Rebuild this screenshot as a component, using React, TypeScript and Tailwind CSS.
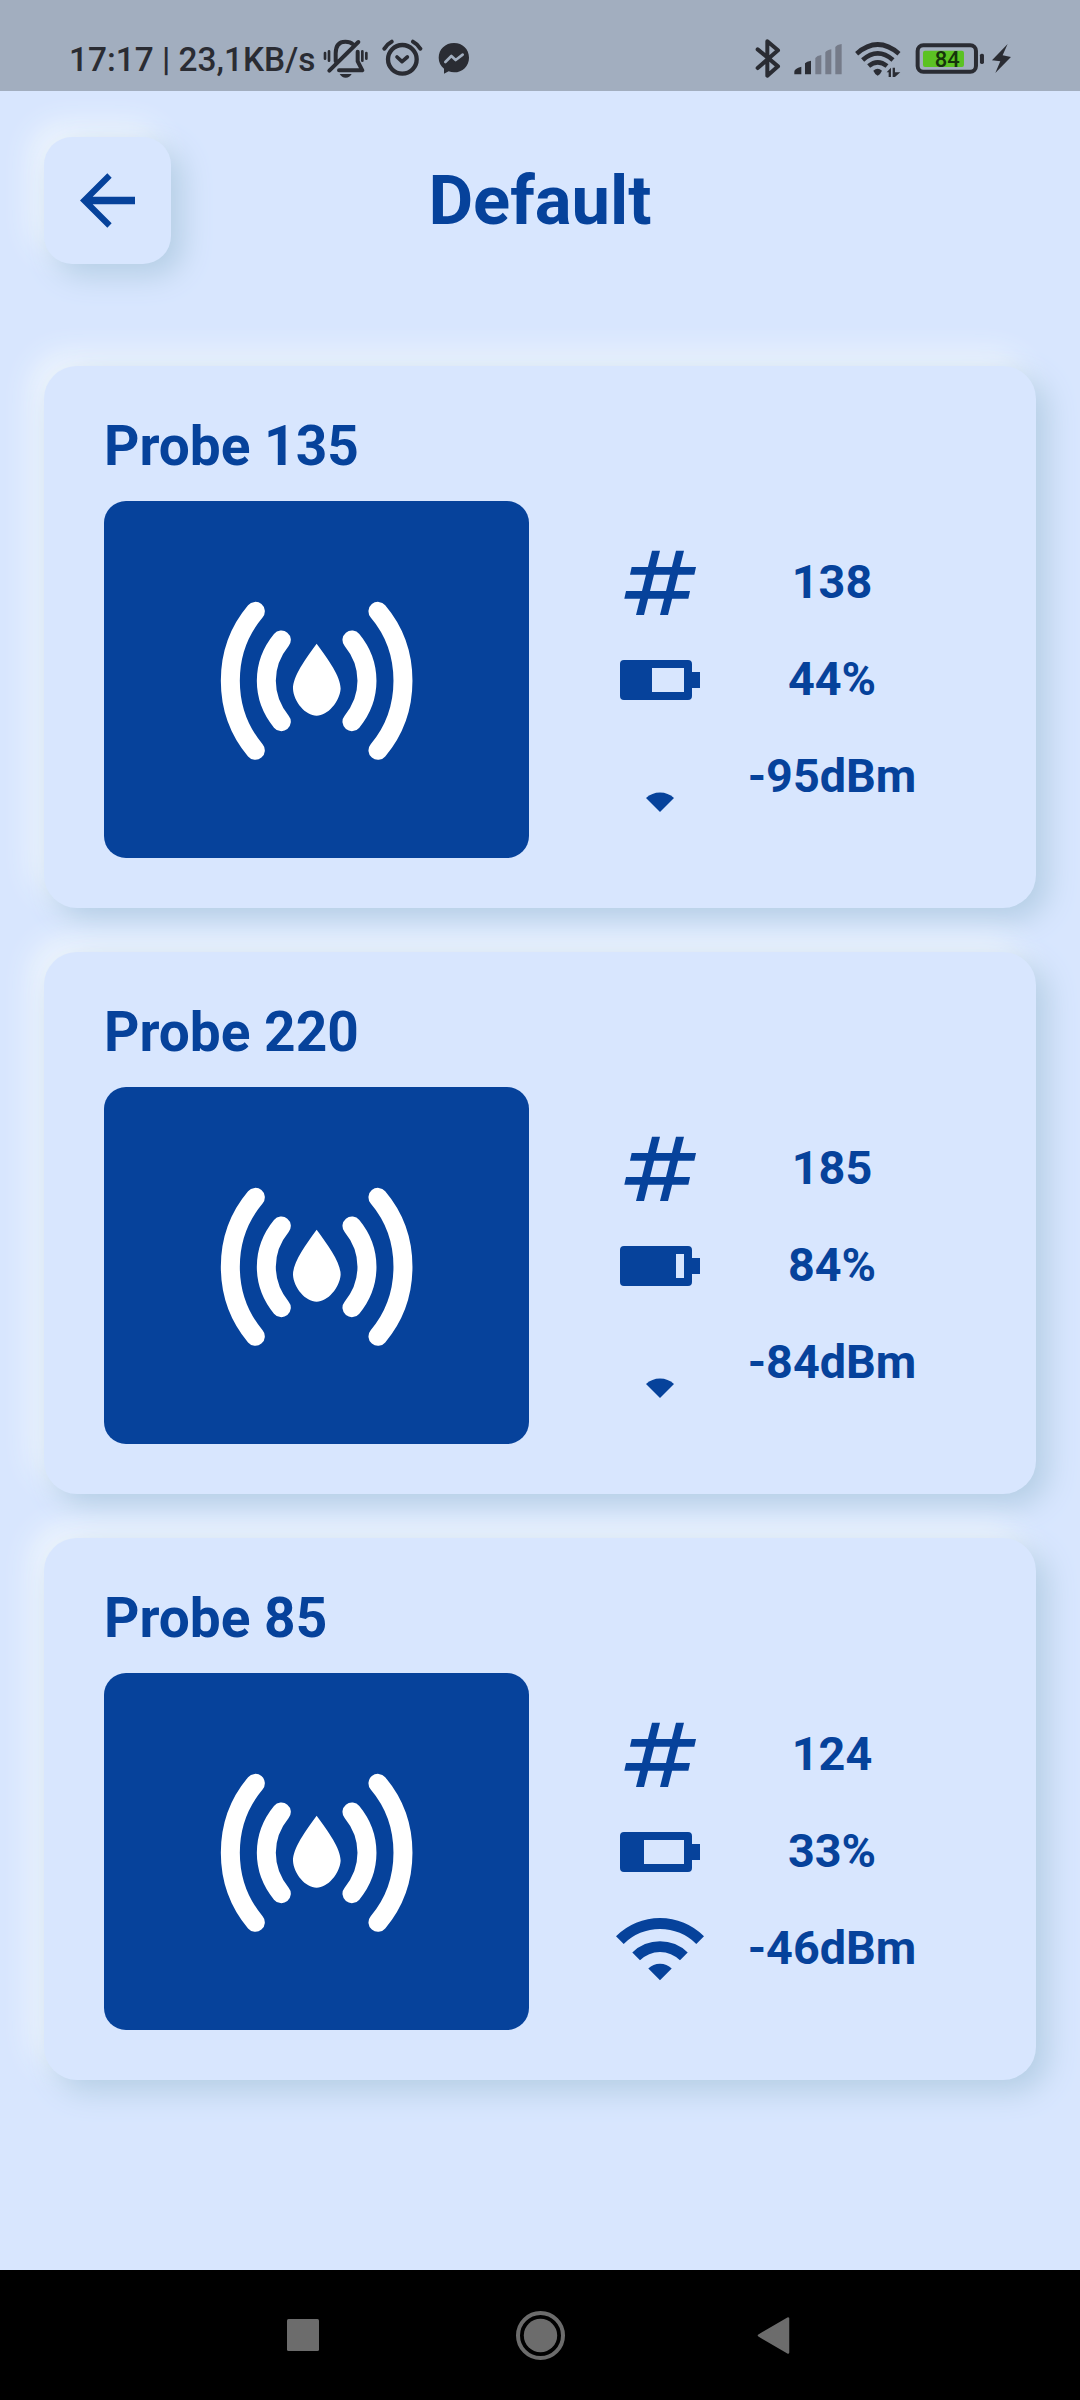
import React from "react";

const INK = "#06429b";

function BackArrow() {
  return (
    <svg viewBox="240 249 165 165" className="h-[55px] w-[55px]" fill={INK}>
      <path d="M240 331.500 322 250l13 13.500-57 57H405v22H278l57 57-13 13.500Z" />
    </svg>
  );
}

function HashIcon() {
  return (
    <svg viewBox="0 0 288 288" className="h-24 w-24" fill={INK}>
      <path d="M120 47h24L96 240H72Z" />
      <path d="M192 47h24L168 240h-24Z" />
      <path d="M59 96H252l-5 23H54Z" />
      <path d="M42 168H234l-5 23H37Z" />
    </svg>
  );
}

function BatteryIcon({ cut }: { cut: number }) {
  return (
    <svg viewBox="0 0 96 96" className="h-24 w-24" fill={INK}>
      <path
        fillRule="evenodd"
        d={`M12 28h64a4 4 0 0 1 4 4v8h8v16h-8v8a4 4 0 0 1-4 4H12a4 4 0 0 1-4-4V32a4 4 0 0 1 4-4ZM${cut} 36V60H72V36Z`}
      />
    </svg>
  );
}

function WifiWeakIcon() {
  return (
    <svg viewBox="0 0 96 96" className="h-24 w-24" fill={INK}>
      <path d="M48 83 34 68.900Q40 63.400 48 63.400T62 68.900Z" />
    </svg>
  );
}

function WifiFullIcon() {
  return (
    <svg viewBox="0 0 96 96" className="h-24 w-24" fill={INK}>
      <path d="M4 35.300A62.200 62.200 0 0 1 92 35.300L84.300 43A51.300 51.300 0 0 0 11.700 43ZM20.300 51.600A39.200 39.200 0 0 1 75.700 51.600L68 59.300A28.300 28.300 0 0 0 28 59.300ZM36.300 67.600A16.600 16.600 0 0 1 59.700 67.600L48 79.300Z" />
    </svg>
  );
}

function ProbeIcon() {
  return (
    <svg viewBox="420 660 580 486" className="mt-[3px] h-[162px] w-[193.300px]" fill="none" stroke="white" strokeWidth="57" strokeLinecap="round">
      <path d="M526 694C426 812 426 992 526 1111M604 780C544 853 544 952 604 1025" />
      <path d="M894 694C994 812 994 992 894 1111M816 780C876 853 876 952 816 1025" />
      <path
        d="M710 791C745 839 782 889 782 926C779 965 743 1007 710 1007S641 965 639 926C639 889 675 839 710 791Z"
        fill="white"
        stroke="none"
      />
    </svg>
  );
}

type Probe = { name: string; id: string; battery: string; cut: number; signal: string; strong: boolean };

const probes: Probe[] = [
  { name: "Probe 135", id: "138", battery: "44%", cut: 40, signal: "-95dBm", strong: false },
  { name: "Probe 220", id: "185", battery: "84%", cut: 64, signal: "-84dBm", strong: false },
  { name: "Probe 85", id: "124", battery: "33%", cut: 32, signal: "-46dBm", strong: true },
];

function Stat({ icon, value }: { icon: React.ReactNode; value: string }) {
  return (
    <div className="flex h-[97px] items-center">
      {icon}
      <span className="-mt-[2px] ml-6 w-[200px] text-center text-[46.750px] leading-[54px] font-bold">{value}</span>
    </div>
  );
}

function ProbeCard({ probe }: { probe: Probe }) {
  return (
    <section className="h-[542px] rounded-[33px] bg-[#d8e6fe] pt-[48px] pl-[60px] shadow-[11px_11px_30px_#b3cde4,-11px_-11px_30px_#f3f8fd]">
      <h2 className="text-[55px] leading-[64px] font-bold">{probe.name}</h2>
      <div className="mt-[22.500px] flex">
        <div className="flex h-[357.500px] w-[425px] items-center justify-center rounded-[22px] bg-[#06429b]">
          <ProbeIcon />
        </div>
        <div className="ml-[83px] pt-[33.500px]">
          <Stat icon={<HashIcon />} value={probe.id} />
          <Stat icon={<BatteryIcon cut={probe.cut} />} value={probe.battery} />
          <Stat icon={probe.strong ? <WifiFullIcon /> : <WifiWeakIcon />} value={probe.signal} />
        </div>
      </div>
    </section>
  );
}

function StatusBar() {
  return (
    <header className="flex h-[91px] items-center bg-[#a2aebf] pt-[27px] pl-[69px] text-[#2a2c33]">
      <span className="mt-[2px] w-[254.300px] text-[33.400px] leading-[40px] font-medium whitespace-nowrap">17:17 | 23,1KB/s</span>
      <svg viewBox="820 60 440 120" className="h-10 w-[146.700px]" fill="none" stroke="#2a2c33" strokeLinecap="round" strokeLinejoin="round">
        <path d="M858 127V103Q858 68 887 68Q902 68 910 76M924 98V127L938 154H868M926 69 839 155" strokeWidth="12" />
        <path d="M826 102V119M838 97V125M938 97V125M950 102V119" strokeWidth="8" />
        <path d="M870 165H906Q900 176 888 176T870 165Z" fill="#2a2c33" stroke="none" />
        <circle cx="1058" cy="121" r="43" strokeWidth="13" />
        <path d="M1042 114 1057 128 1073 114" strokeWidth="11" />
        <path d="M1004 89Q1012 75 1026 68M1090 68Q1104 75 1112 89" strokeWidth="12" />
        <path d="M1213 72C1187 72 1167 91 1167 116C1167 130 1173 141 1183 149V164L1197 157Q1205 160 1213 160C1239 160 1258 141 1258 116S1239 72 1213 72Z" fill="#2a2c33" stroke="none" />
        <path d="M1187 129 1205 111 1218 123 1239 107" stroke="#a2aebf" strokeWidth="8" />
      </svg>
      <svg viewBox="75 55 775 125" className="ml-[285px] h-[41.700px] w-[258.300px]" fill="none" stroke="#2a2c33" strokeLinecap="round" strokeLinejoin="round">
        <path d="M83 89 144 140 112 168V65L144 92 83 145" strokeWidth="12" />
        <g fill="#2a2c33" stroke="none">
          <path d="M193 156Q193 147 214 141V164H193ZM225 131Q230 125 243 123V164H225Z" />
          <path d="M256 115Q261 108 274 106V164H256ZM286 98Q290 92 304 89V164H286ZM316 82Q321 75 335 73V164H316Z" fill="#757b89" />
          <path d="M430 153Q443 141 456 153Q452 163 443 168Q434 163 430 153Z" />
          <path d="M470 158 483 144V172H476V158ZM488 144H495V158H511L495 172H488Z" />
        </g>
        <path d="M380 102Q443 47 507 102M398 121Q443 81 489 121" strokeWidth="14" strokeLinecap="butt" />
        <path d="M416 139Q443 117 471 139" strokeWidth="14" strokeLinecap="butt" />
        <rect x="563" y="77" width="175" height="79" rx="17" strokeWidth="12" />
        <rect x="579" y="93" width="123" height="49" rx="6" fill="#5bc223" stroke="none" />
        <rect x="750" y="102" width="12" height="31" rx="5" fill="#2a2c33" stroke="none" />
        <path d="M833 73 786 122 811 125 796 160 843 112 818 107Z" fill="#2a2c33" stroke="none" />
        <text x="652" y="143" textAnchor="middle" fontSize="66" fill="#16330c" stroke="none" fontWeight="500">84</text>
      </svg>
    </header>
  );
}

export default function App() {
  return (
    <div className="flex h-[2400px] w-[1080px] flex-col overflow-hidden bg-[#d8e6fe] font-[Roboto,sans-serif] text-[#06429b]">
      <StatusBar />
      <div className="mx-11 mt-[46px] grid h-[127px] grid-cols-[127px_1fr_127px] items-center">
        <button className="flex h-[127px] w-[127px] items-center justify-center rounded-[28px] bg-[#d8e6fe] shadow-[11px_11px_30px_#b3cde4,-11px_-11px_30px_#f3f8fd]">
          <BackArrow />
        </button>
        <h1 className="text-center text-[68.750px] leading-[78px] font-bold">Default</h1>
      </div>
      <main className="mx-11 mt-[102px] flex flex-1 flex-col gap-11">
        {probes.map((p) => (
          <ProbeCard key={p.name} probe={p} />
        ))}
      </main>
      <nav className="flex h-[130px] items-center bg-black">
        <svg viewBox="0 0 1080 130" className="h-[130px] w-[1080px]" fill="#6c6c6c">
          <rect x="287" y="49" width="32" height="32" rx="1.500" />
          <circle cx="540.500" cy="65.500" r="16.700" />
          <circle cx="540.500" cy="65.500" r="22.500" fill="none" stroke="#6c6c6c" strokeWidth="4" />
          <path d="M759 65.500 788 48.500V82.500Z" stroke="#6c6c6c" strokeWidth="2.500" strokeLinejoin="round" />
        </svg>
      </nav>
    </div>
  );
}
